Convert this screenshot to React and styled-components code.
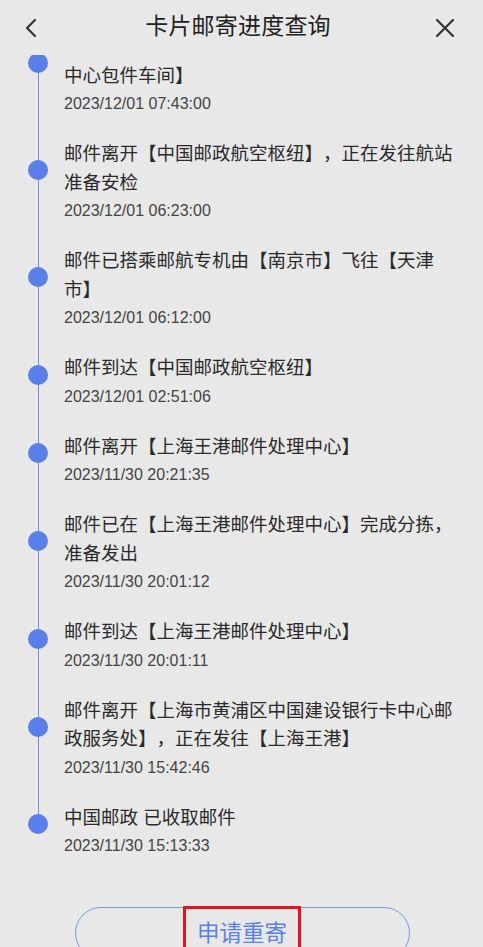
import React from "react";
import styled, { createGlobalStyle } from "styled-components";

const events = [
  { text: "邮件离开【天津市】，正在发往【天津邮件处理中心包件车间】", time: "2023/12/01 07:43:00", lines: 2 },
  { text: "邮件离开【中国邮政航空枢纽】，正在发往航站准备安检", time: "2023/12/01 06:23:00", lines: 2 },
  { text: "邮件已搭乘邮航专机由【南京市】飞往【天津市】", time: "2023/12/01 06:12:00", lines: 2 },
  { text: "邮件到达【中国邮政航空枢纽】", time: "2023/12/01 02:51:06", lines: 1 },
  { text: "邮件离开【上海王港邮件处理中心】", time: "2023/11/30 20:21:35", lines: 1 },
  { text: "邮件已在【上海王港邮件处理中心】完成分拣，准备发出", time: "2023/11/30 20:01:12", lines: 2 },
  { text: "邮件到达【上海王港邮件处理中心】", time: "2023/11/30 20:01:11", lines: 1 },
  { text: "邮件离开【上海市黄浦区中国建设银行卡中心邮政服务处】，正在发往【上海王港】", time: "2023/11/30 15:42:46", lines: 2 },
  { text: "中国邮政 已收取邮件", time: "2023/11/30 15:13:33", lines: 1 },
];

const GlobalStyle = createGlobalStyle`
  html, body {
    margin: 0;
    padding: 0;
    background: #e8e8e8;
    overflow: hidden;
  }
  * { box-sizing: border-box; }
`;

const App = () => {
  return (
    <Page>
      <GlobalStyle />
      <Header>
        <IconButton aria-label="back">
          <svg width="14" height="20" viewBox="0 0 14 20">
            <path d="M11 2 L3 10 L11 18" fill="none" stroke="#333" strokeWidth="2.2" strokeLinecap="round" strokeLinejoin="round" />
          </svg>
        </IconButton>
        <Title>卡片邮寄进度查询</Title>
        <IconButton aria-label="close">
          <svg width="20" height="20" viewBox="0 0 20 20">
            <path d="M2 2 L18 18 M18 2 L2 18" fill="none" stroke="#333" strokeWidth="2.2" strokeLinecap="round" />
          </svg>
        </IconButton>
      </Header>

      <Scroll>
        <Timeline>
          {events.map((e, i) => (
            <Item key={i} $last={i === events.length - 1}>
              <Dot $lines={e.lines} />
              <Desc>{e.text}</Desc>
              <Time>{e.time}</Time>
            </Item>
          ))}
        </Timeline>
      </Scroll>

      <Footer>
        <Resend>
          <Mark>申请重寄</Mark>
        </Resend>
      </Footer>
    </Page>
  );
};

const Page = styled.div`
  height: 947px;
  overflow: hidden;
  display: flex;
  flex-direction: column;
  background: #e8e8e8;
  font-family: "Liberation Sans", "Noto Sans CJK SC", sans-serif;
  color: #2f2f2f;
`;

const Header = styled.header`
  height: 55px;
  flex: none;
  display: flex;
  align-items: center;
  justify-content: space-between;
  padding: 0 26px 0 19px;
`;

const IconButton = styled.button`
  border: 0;
  background: none;
  padding: 0;
  width: 24px;
  height: 24px;
  display: flex;
  align-items: center;
  justify-content: center;
`;

const Title = styled.h1`
  margin: -3px 0 0;
  font-size: 23px;
  line-height: 1;
  font-weight: 400;
  color: #222;
  letter-spacing: 0.2px;
`;

const Scroll = styled.div`
  flex: none;
  height: 827px;
  overflow: hidden;
`;

const Timeline = styled.ul`
  list-style: none;
  margin: -22px 0 0;
  padding: 0;
`;

const Item = styled.li`
  position: relative;
  padding: 0 28px 25px 64px;

  &::before {
    content: "";
    position: absolute;
    left: 37.5px;
    top: 0;
    width: 1px;
    height: ${(p) => (p.$last ? "20px" : "100%")};
    background: #7392da;
  }
`;

const Dot = styled.span`
  position: absolute;
  left: 28px;
  top: ${(p) => (p.$lines > 1 ? "20px" : "10.5px")};
  width: 20px;
  height: 20px;
  border-radius: 50%;
  background: #5a7fe8;
`;

const Desc = styled.div`
  font-size: 18.5px;
  line-height: 28.5px;
  color: #2a2a2a;
  text-spacing-trim: space-all;
`;

const Time = styled.div`
  margin-top: 3px;
  font-size: 16px;
  line-height: 22px;
  color: #444;
`;

const Footer = styled.div`
  flex: none;
  padding-top: 25px;
  display: flex;
  justify-content: center;
`;

const Resend = styled.button`
  width: 335px;
  height: 52px;
  margin-left: 1px;
  border: 1px solid #7b98e6;
  border-radius: 26px;
  background: transparent;
  display: flex;
  justify-content: center;
  align-items: flex-start;
  padding: 0;
`;

const Mark = styled.span`
  margin-top: -2px;
  padding: 7px 11px 14px;
  border: 3px solid #e3141b;
  font-family: "Noto Sans CJK SC", sans-serif;
  font-size: 22.5px;
  line-height: 30px;
  color: #5b80e6;
`;

export default App;
